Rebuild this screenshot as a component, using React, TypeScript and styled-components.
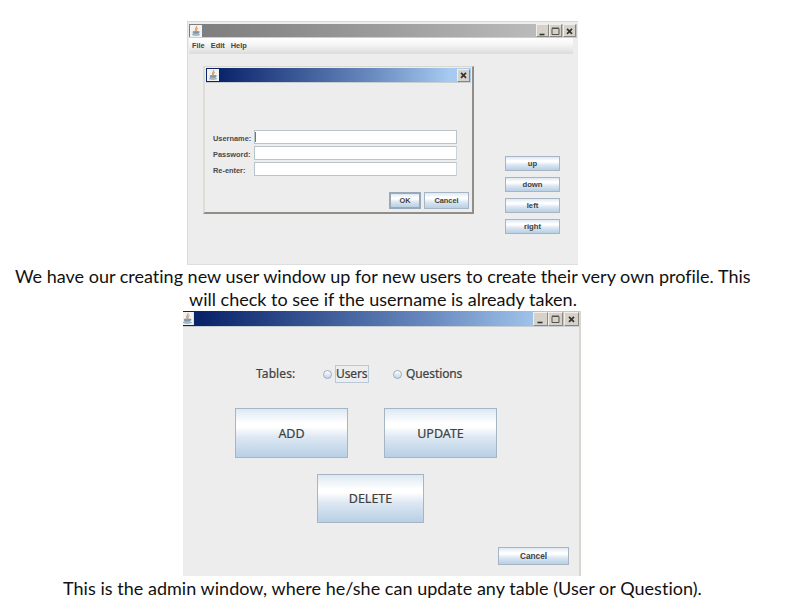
import React from "react";
import styled, { createGlobalStyle } from "styled-components";

const GlobalStyle = createGlobalStyle`
  * { box-sizing: border-box; }
  body { margin: 0; background: #fff; overflow: hidden; }
`;

const Page = styled.main`
  width: 806px;
  height: 612px;
  padding-top: 21px;
  background: #fff;
  overflow: hidden;
`;

const Caption = styled.p`
  margin: 0;
  height: 46px;
  color: #111;
  font-family: Lato, "Open Sans", sans-serif;
  font-size: 18px;
  line-height: 23px;
  font-variant-ligatures: none;
`;

const CaptionLine = styled.span<{ $left: number; $spacing?: number }>`
  display: block;
  margin-left: ${(p) => p.$left}px;
  letter-spacing: ${(p) => p.$spacing ?? 0}px;
  white-space: nowrap;
`;

const GameWindow = styled.section`
  width: 391px;
  height: 244px;
  margin-left: 187px;
  padding: 2px 1px 0;
  background: #ededed;
  border-top: 1px solid #d9d7d2;
  border-left: 1px solid #dcdad5;
  border-bottom: 1px solid #dedede;
`;

const AdminWindow = styled.section`
  width: 398px;
  height: 265px;
  margin-left: 183px;
  margin-bottom: 1px;
  background: #ededed;
  border-right: 2px solid #d9d5d0;
`;

const TitleBar = styled.header<{ $tone: "grey" | "blue"; $height: number; $flush?: boolean }>`
  display: flex;
  align-items: center;
  justify-content: space-between;
  height: ${(p) => p.$height}px;
  padding: 0 ${(p) => (p.$flush ? 0 : 1)}px;
  background: ${(p) =>
    p.$tone === "grey"
      ? "linear-gradient(90deg, #7c7c7c, #9b9b9b 48%, #c3c3c3)"
      : "linear-gradient(90deg, #0a246a 5%, #6a8bc0 63%, #a6caf0 92%)"};
  border-bottom: 1px solid #c9ced5;
`;

const Controls = styled.div`
  display: flex;
`;

const Control = styled.button<{ $gap?: boolean; $wide?: boolean }>`
  display: flex;
  align-items: center;
  justify-content: center;
  width: ${(p) => (p.$wide ? 15 : 13)}px;
  height: ${(p) => (p.$wide ? 14 : 13)}px;
  margin-left: ${(p) => (p.$gap ? 1 : 0)}px;
  padding: 0;
  background: #d6d2ca;
  border: 1px solid;
  border-color: #f1efea #8a8782 #8a8782 #f1efea;
`;

const Menu = styled.nav`
  display: flex;
  gap: 6px;
  width: 384px;
  height: 16px;
  padding-left: 3px;
  background: linear-gradient(#fff, #f5f5f5 40%, #dcdcdc);
  color: #444;
  font: bold 7.4px/15px "Liberation Sans", sans-serif;
`;

const GameBody = styled.div`
  display: flex;
  align-items: flex-start;
  padding: 12px 0 0 14px;
`;

const Dialog = styled.section`
  width: 271px;
  height: 148px;
  padding: 1px;
  background: #ededed;
  border: solid;
  border-width: 1px 2px 2px 2px;
  border-color: #d9d7d0 #918e89 #918e89 #dedcd6;
`;

const Form = styled.div`
  display: grid;
  grid-template-columns: 41px 203px;
  grid-template-rows: 16px 16px 14px;
  padding: 47px 0 0 7px;
`;

const FieldLabel = styled.label`
  color: #4a4a4a;
  font: bold 7.4px/17px "Liberation Sans", sans-serif;
  white-space: nowrap;
`;

const Field = styled.input`
  width: 203px;
  height: 14px;
  padding: 0 1px;
  background: #fff;
  border: 1px solid #b9c3cc;
  border-right-color: #cbd2d8;
  outline: none;
  font: 8px "Liberation Sans", sans-serif;
`;

const FocusedField = styled.span`
  width: 203px;
  height: 14px;
  display: block;
  background: linear-gradient(#777, #777) 0 1px / 1px 10px no-repeat #fff;
  border: 1px solid #b9c3cc;
`;

const DialogActions = styled.div`
  display: flex;
  justify-content: flex-end;
  gap: 3px;
  padding: 16px 2px 0 0;
`;

const SwingButton = styled.button<{
  $w: number;
  $h: number;
  $large?: boolean;
  $strong?: boolean;
  $size?: number;
}>`
  display: flex;
  align-items: center;
  justify-content: center;
  width: ${(p) => p.$w}px;
  height: ${(p) => p.$h}px;
  padding: 0;
  color: #404040;
  background: linear-gradient(#dde8f3, #fff 30%, #fff 37%, #dce7f2 60%, #b8cfe5);
  border: ${(p) => (p.$strong ? 2 : 1)}px solid ${(p) => (p.$strong ? "#9aa9b8" : "#a5b5c4")};
  font: ${(p) =>
    p.$large
      ? '12.5px "Noto Sans", sans-serif'
      : `bold ${p.$size ?? 7.4}px "Liberation Sans", sans-serif`};
  -webkit-text-stroke: ${(p) => (p.$large ? "0.2px #404040" : "0")};
`;

const Directions = styled.div`
  display: flex;
  flex-direction: column;
  gap: 6px;
  padding: 90px 0 0 31px;
`;

const TableChoice = styled.div`
  display: flex;
  align-items: center;
  height: 18px;
  margin-top: 38px;
  padding-left: 73px;
  color: #404040;
  font: 12px/18px "Noto Sans", sans-serif;
  letter-spacing: -0.1px;
  -webkit-text-stroke: 0.2px #404040;
`;

const ChoiceTitle = styled.span`
  width: 67px;
  letter-spacing: 0.1px;
`;

const Option = styled.label<{ $w: number }>`
  display: flex;
  align-items: center;
  width: ${(p) => p.$w}px;
  gap: 4px;
`;

const Radio = styled.span`
  width: 9px;
  height: 9px;
  border: 1px solid #9aacbe;
  border-radius: 50%;
  background: linear-gradient(#fff, #c3d5e7);
`;

const OptionText = styled.span<{ $focused?: boolean }>`
  height: 16px;
  line-height: 16px;
  box-shadow: ${(p) => (p.$focused ? "0 0 0 1px #b9c9d8" : "none")};
`;

const ButtonRow = styled.div<{ $top: number; $left: number }>`
  display: flex;
  gap: 36px;
  padding: ${(p) => p.$top}px 0 0 ${(p) => p.$left}px;
`;

const JavaMark = ({ cropped }: { cropped?: boolean }) => (
  <svg
    width={cropped ? 11 : 12}
    height={cropped ? 13 : 12}
    viewBox={cropped ? "2 0 10 12" : "0 0 12 12"}
    aria-hidden="true"
  >
    <rect width="12" height="12" fill="#f0f2f3" />
    <path d="M6.6 1C7 3 4.5 3.2 5.5 5.8M7.8 3C6.1 4 6.7 4.7 6.4 6" fill="none" stroke="#e39b62" strokeWidth="1.1" />
    <path d="M3.2 6.5h5v2h-5zM8 6.6c2-.5 1.8 1.2 0 1.5M2 9.6c2 .9 5.8.9 8 0" fill="#8199aa" stroke="#8199aa" strokeWidth=".8" />
  </svg>
);

const glyphs = {
  minimize: <path d="M2.5 8.5h5" strokeWidth="1.6" />,
  maximize: <path d="M2 2.5h7v6h-7zM2 2h7" stroke="#55524d" />,
  close: <path d="M3 2.8l5 5M8 2.8l-5 5" strokeWidth="1.7" />,
};

const ControlIcon = ({ kind }: { kind: keyof typeof glyphs }) => (
  <svg width="11" height="10" viewBox="0 0 11 10" fill="none" stroke="#333">
    {glyphs[kind]}
  </svg>
);

const WindowControls = ({ wide }: { wide?: boolean }) => (
  <Controls>
    <Control $wide={wide} aria-label="Minimize"><ControlIcon kind="minimize" /></Control>
    <Control $wide={wide} aria-label="Maximize"><ControlIcon kind="maximize" /></Control>
    <Control $wide={wide} $gap aria-label="Close"><ControlIcon kind="close" /></Control>
  </Controls>
);

export default function App() {
  return (
    <Page>
      <GlobalStyle />
      <GameWindow>
        <TitleBar $tone="grey" $height={14}>
          <JavaMark />
          <WindowControls />
        </TitleBar>
        <Menu><span>File</span><span>Edit</span><span>Help</span></Menu>
        <GameBody>
          <Dialog>
            <TitleBar $tone="blue" $height={15}>
              <JavaMark />
              <Control aria-label="Close"><ControlIcon kind="close" /></Control>
            </TitleBar>
            <Form>
              <FieldLabel>Username:</FieldLabel><FocusedField />
              <FieldLabel>Password:</FieldLabel><Field aria-label="Password" />
              <FieldLabel>Re-enter:</FieldLabel><Field aria-label="Re-enter" />
            </Form>
            <DialogActions>
              <SwingButton $w={32} $h={17} $strong>OK</SwingButton>
              <SwingButton $w={45} $h={17}>Cancel</SwingButton>
            </DialogActions>
          </Dialog>
          <Directions>
            {["up", "down", "left", "right"].map((name) => (
              <SwingButton key={name} $w={55} $h={15} $size={7.7}>{name}</SwingButton>
            ))}
          </Directions>
        </GameBody>
      </GameWindow>
      <Caption>
        <CaptionLine $left={15}>We have our creating new user window up for new users to create their very own profile. This</CaptionLine>
        <CaptionLine $left={189}>will check to see if the username is already taken.</CaptionLine>
      </Caption>
      <AdminWindow>
        <TitleBar $tone="blue" $height={16} $flush>
          <JavaMark cropped />
          <WindowControls wide />
        </TitleBar>
        <TableChoice>
          <ChoiceTitle>Tables:</ChoiceTitle>
          <Option $w={70}><Radio /><OptionText $focused>Users</OptionText></Option>
          <Option $w={80}><Radio /><OptionText>Questions</OptionText></Option>
        </TableChoice>
        <ButtonRow $top={25} $left={52}>
          <SwingButton $w={113} $h={50} $large>ADD</SwingButton>
          <SwingButton $w={113} $h={50} $large>UPDATE</SwingButton>
        </ButtonRow>
        <ButtonRow $top={16} $left={134}>
          <SwingButton $w={107} $h={49} $large>DELETE</SwingButton>
        </ButtonRow>
        <ButtonRow $top={24} $left={315}>
          <SwingButton $w={71} $h={18} $size={8.3}>Cancel</SwingButton>
        </ButtonRow>
      </AdminWindow>
      <Caption>
        <CaptionLine $left={63} $spacing={0.03}>This is the admin window, where he/she can update any table (User or Question).</CaptionLine>
      </Caption>
    </Page>
  );
}
